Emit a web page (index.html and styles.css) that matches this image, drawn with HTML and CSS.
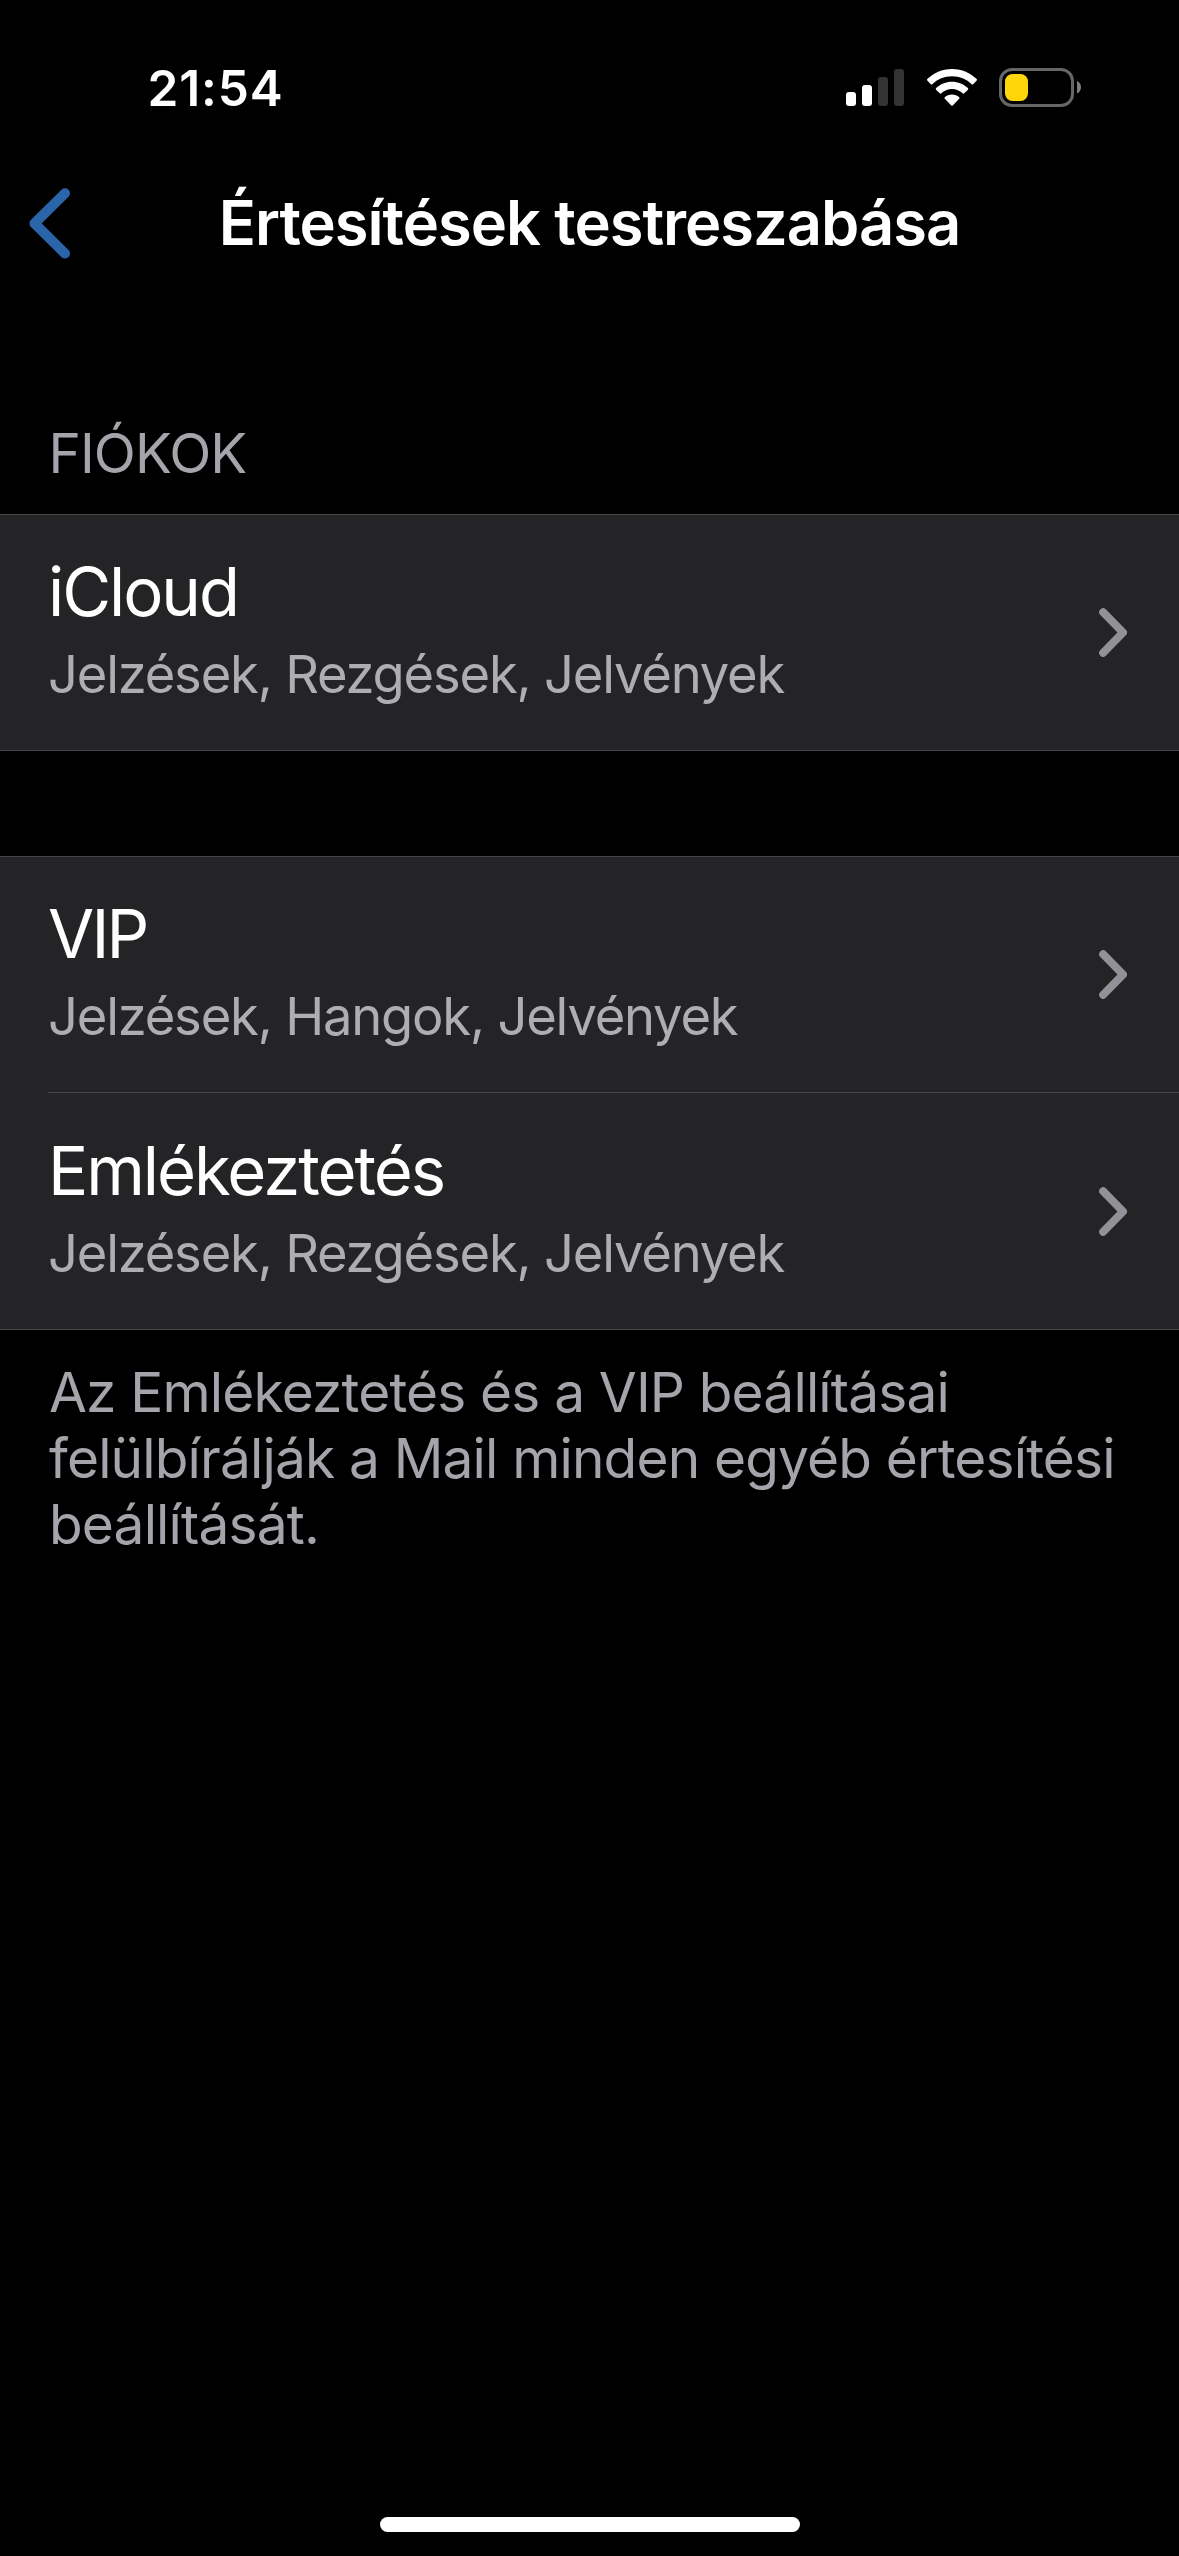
FILE: index.html
```html
<!DOCTYPE html>
<html lang="hu">
<head>
<meta charset="utf-8">
<title>Értesítések testreszabása</title>
<link rel="stylesheet" href="styles.css">
</head>
<body>
<div class="screen">
  <header class="status-bar">
    <span class="time">21:54</span>
    <div class="status-icons">
      <svg class="signal" width="58" height="37" viewBox="0 0 58 37">
        <rect x="0" y="23" width="10" height="14" rx="3" fill="#fff"/>
        <rect x="16" y="16" width="10" height="21" rx="3" fill="#fff"/>
        <rect x="32" y="8" width="10" height="29" rx="3" fill="#333"/>
        <rect x="48" y="0" width="10" height="37" rx="3" fill="#333"/>
      </svg>
      <svg class="wifi" width="52" height="38" viewBox="0 0 52 38" fill="#fff">
        <path d="M26 0C36 0 44.500 3.900 50.700 10.100Q51.400 10.900 50.700 11.600L47.200 15.200Q46.500 15.900 45.700 15.200C40.500 10.200 33.700 7.300 26 7.300S11.500 10.200 6.300 15.200Q5.500 15.900 4.800 15.200L1.300 11.600Q.600 10.900 1.300 10.100C7.500 3.900 16 0 26 0Z"/>
        <path d="M26 12.700C32.200 12.700 37.700 15.100 41.900 19.100Q42.700 19.900 41.900 20.700L38.200 24.300Q37.500 25 36.700 24.300C33.900 21.700 30.200 20.100 26 20.100S18.100 21.700 15.300 24.300Q14.500 25 13.800 24.300L10.100 20.700Q9.300 19.900 10.100 19.100C14.300 15.100 19.800 12.700 26 12.700Z"/>
        <path d="M26 25.600C28.800 25.600 31.300 26.600 33.200 28.300Q34 29 33.200 29.800L26.700 36.400Q26 37.100 25.300 36.400L18.800 29.800Q18 29 18.800 28.300C20.700 26.600 23.200 25.600 26 25.600Z"/>
      </svg>
      <svg class="battery" width="83" height="39" viewBox="0 0 83 39">
        <rect x="1.500" y="1.500" width="72" height="36" rx="11.500" fill="none" stroke="#666" stroke-width="3"/>
        <rect x="6" y="6" width="23" height="27" rx="7.500" fill="#ffd60a"/>
        <path d="M78 13C80.500 14.200 82 16.600 82 19.300S80.500 24.400 78 25.600Z" fill="#808080"/>
      </svg>
    </div>
  </header>
  <nav class="nav-bar">
    <svg class="back" width="42" height="71" viewBox="0 0 42 71"><path d="M36 5.200 5.500 35.400 36 65.600"/></svg>
    <h1 class="title">Értesítések testreszabása</h1>
  </nav>
  <main>
    <h2 class="section-label">FIÓKOK</h2>
    <section class="group">
      <div class="row">
        <div class="row-text">
          <div class="name">iCloud</div>
          <div class="detail">Jelzések, Rezgések, Jelvények</div>
        </div>
        <svg class="chevron" width="28" height="49" viewBox="0 0 28 49"><path d="M4.200 4.200 24 24.500 4.200 44.800"/></svg>
      </div>
    </section>
    <section class="group">
      <div class="row">
        <div class="row-text">
          <div class="name name-caps">VIP</div>
          <div class="detail">Jelzések, Hangok, Jelvények</div>
        </div>
        <svg class="chevron" width="28" height="49" viewBox="0 0 28 49"><path d="M4.200 4.200 24 24.500 4.200 44.800"/></svg>
      </div>
      <div class="row">
        <div class="row-text">
          <div class="name">Emlékeztetés</div>
          <div class="detail">Jelzések, Rezgések, Jelvények</div>
        </div>
        <svg class="chevron" width="28" height="49" viewBox="0 0 28 49"><path d="M4.200 4.200 24 24.500 4.200 44.800"/></svg>
      </div>
    </section>
    <p class="note">Az Emlékeztetés és a VIP beállításai<br>felülbírálják a Mail minden egyéb értesítési<br>beállítását.</p>
  </main>
  <footer class="home"><div class="home-indicator"></div></footer>
</div>
</body>
</html>
```
FILE: styles.css
```css
* { box-sizing: border-box; margin: 0; padding: 0; }
body { background: #000; }
svg { display: block; flex: none; }

.screen {
  display: flex;
  flex-direction: column;
  width: 1179px;
  height: 2556px;
  background: #000;
  color: #fff;
  font-family: Inter, "Liberation Sans", sans-serif;
  white-space: nowrap;
}

.status-bar {
  display: flex;
  justify-content: space-between;
  height: 141px;
  padding: 68px 97px 0 147.5px;
}
.time { font-size: 49.5px; font-weight: 600; line-height: 40px; letter-spacing: 0.9px; }
.status-icons { display: flex; align-items: flex-start; }
.signal { margin: 1px 22px 0 0; }
.wifi { margin: 1px 21px 0 0; }

.nav-bar {
  display: grid;
  grid-template-columns: 193px 1fr 193px;
  align-items: center;
  height: 164px;
}
.back {
  margin-left: 29px;
  fill: none;
  stroke: #2965a8;
  stroke-width: 10;
  stroke-linecap: round;
  stroke-linejoin: round;
}
.title {
  font-size: 61.4px;
  font-weight: 600;
  line-height: 80px;
  letter-spacing: -1.01px;
  text-align: center;
}

.section-label {
  height: 209px;
  padding: 115px 48px 0 48.5px;
  color: #a4a4ab;
  font-size: 55px;
  font-weight: 400;
  line-height: 66px;
  letter-spacing: -0.94px;
}
.group {
  border-top: 1px solid #464649;
  border-bottom: 1px solid #464649;
  background: #242426;
}
.group + .group { margin-top: 105px; }
.row {
  display: flex;
  align-items: center;
  justify-content: space-between;
  height: 235px;
  margin-left: 48px;
  padding-right: 52px;
}
.row + .row { height: 237px; border-top: 1px solid #464649; }
.row-text { align-self: flex-start; padding-top: 36px; }
.row + .row .row-text { padding-top: 37px; }
.name { font-size: 67px; line-height: 82px; letter-spacing: -2.05px; }
.name-caps { letter-spacing: -2.8px; }
.detail {
  margin-top: 8px;
  color: #aeaeb2;
  font-size: 52.5px;
  line-height: 66px;
  letter-spacing: -1.2px;
}
.chevron {
  fill: none;
  stroke: #919197;
  stroke-width: 8;
  stroke-linecap: round;
  stroke-linejoin: round;
}
.note {
  padding: 29px 48px 0 49px;
  color: #a4a4ab;
  font-size: 55px;
  line-height: 66px;
  letter-spacing: -0.84px;
}

.home { display: flex; justify-content: center; margin-top: auto; padding-bottom: 24px; }
.home-indicator { width: 420px; height: 15px; border-radius: 8px; background: #fff; }
```
